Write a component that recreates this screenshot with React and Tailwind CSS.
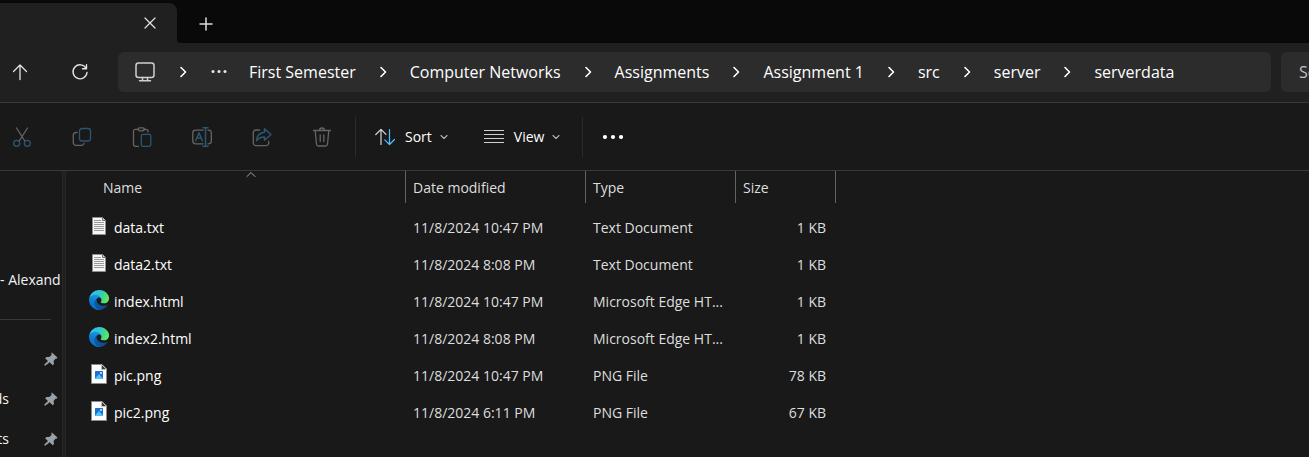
import React from "react";

const CRUMBS = [
  "First Semester",
  "Computer Networks",
  "Assignments",
  "Assignment 1",
  "src",
  "server",
  "serverdata",
];

const FILES = [
  { name: "data.txt", date: "11/8/2024 10:47 PM", type: "Text Document", size: "1 KB", icon: "text" },
  { name: "data2.txt", date: "11/8/2024 8:08 PM", type: "Text Document", size: "1 KB", icon: "text" },
  { name: "index.html", date: "11/8/2024 10:47 PM", type: "Microsoft Edge HT...", size: "1 KB", icon: "edge" },
  { name: "index2.html", date: "11/8/2024 8:08 PM", type: "Microsoft Edge HT...", size: "1 KB", icon: "edge" },
  { name: "pic.png", date: "11/8/2024 10:47 PM", type: "PNG File", size: "78 KB", icon: "image" },
  { name: "pic2.png", date: "11/8/2024 6:11 PM", type: "PNG File", size: "67 KB", icon: "image" },
];

const GREY = "#656565";
const BLUE = "#2b5770";

function Stroke({ size = 20, width = 1.2, color = "currentColor", children, className = "" }) {
  return (
    <svg
      width={size}
      height={size}
      viewBox={`0 0 ${size} ${size}`}
      fill="none"
      stroke={color}
      strokeWidth={width}
      strokeLinecap="round"
      strokeLinejoin="round"
      className={`shrink-0 ${className}`}
      aria-hidden="true"
    >
      {children}
    </svg>
  );
}

function TextFileIcon() {
  return (
    <svg width="20" height="20" viewBox="0 0 20 20" aria-hidden="true">
      <path d="M3.5 1.5h10l3 3v14h-13z" fill="#f6f6f6" stroke="#8d8d8d" />
      <path d="M13.5 1.5v3h3" fill="#d0d0d0" stroke="#6f6f6f" />
      <path d="M5 4.5h7M5 6.5h10M5 8.5h10M5 10.5h10M5 12.5h10M5 14.5h10" stroke="#9b9b9b" />
    </svg>
  );
}

function EdgeIcon({ id }) {
  return (
    <svg width="20" height="20" viewBox="0 0 256 256" aria-hidden="true">
      <defs>
        <linearGradient id={`${id}a`} x1="0.1" y1="0.5" x2="0.95" y2="0.5">
          <stop offset="0" stopColor="#0c59a4" />
          <stop offset="1" stopColor="#114a8b" />
        </linearGradient>
        <linearGradient id={`${id}b`} x1="0.6" y1="0" x2="0.3" y2="1">
          <stop offset="0" stopColor="#1b9de2" />
          <stop offset="0.5" stopColor="#0f7bd2" />
          <stop offset="1" stopColor="#0870cc" />
        </linearGradient>
        <linearGradient id={`${id}c`} x1="0" y1="0.3" x2="1" y2="0.6">
          <stop offset="0" stopColor="#35c1f1" />
          <stop offset="0.45" stopColor="#2ec5d3" />
          <stop offset="0.75" stopColor="#43d98a" />
          <stop offset="1" stopColor="#66eb4e" />
        </linearGradient>
      </defs>
      <path
        fill={`url(#${id}a)`}
        d="M231 190.500c-3.400 1.800-6.900 3.400-10.500 4.700a101.300 101.300 0 0 1-35.700 6.400c-47 0-88-32.300-88-73.800a31.300 31.300 0 0 1 16.300-27.200c-42.500 1.800-53.500 46.100-53.500 72 0 73.400 67.700 80.900 82.300 80.900 7.800 0 19.700-2.300 26.800-4.500l1.300-.5a128 128 0 0 0 66.500-52.600 4 4 0 0 0-5.200-5.400z"
      />
      <path
        fill={`url(#${id}b)`}
        d="M105.700 241.400a79.200 79.200 0 0 1-22.700-21.300 80.700 80.700 0 0 1 29.500-120c3.200-1.400 8.500-4.100 15.600-4a32.400 32.400 0 0 1 25.700 13 31.900 31.900 0 0 1 6.300 18.700c0-.2 24.500-79.600-80-79.600C36.200 48.200.1 89.900.1 126.400a130.200 130.200 0 0 0 12.100 56 128 128 0 0 0 156.400 67.100 75.500 75.500 0 0 1-62.800-8z"
      />
      <path
        fill={`url(#${id}c)`}
        d="M152.300 148.900c-.8 1-3.300 2.500-3.300 5.700 0 2.600 1.700 5.100 4.700 7.300 14.500 10.100 41.900 8.700 42 8.700a60.100 60.100 0 0 0 30.500-8.400 61.900 61.900 0 0 0 30.500-53.400c.3-22.400-8-37.300-11.300-43.900C224.100 23.500 177.700 0 127.100 0A128 128 0 0 0 0 126.200c.5-36.500 36.800-66 80-66 3.500 0 23.500.3 42 10 16.300 8.600 24.900 19 30.800 29.200 6.100 10.600 7.200 24.100 7.200 29.500s-2.700 13.300-7.700 20z"
      />
    </svg>
  );
}

function ImageFileIcon() {
  return (
    <svg width="20" height="20" viewBox="0 0 20 20" aria-hidden="true">
      <path d="M2.500.500h10.500l4.500 4.500v14.500h-15z" fill="#fdfdfd" stroke="#8a8a8a" />
      <path d="M12.500.500v5h5z" fill="#3a3a3a" stroke="#c9c9c9" strokeWidth="0.800" />
      <rect x="6" y="7" width="8" height="8" rx="0.600" fill="#1f6fd0" />
      <path d="M6 14.400l4-4.400 4 4.400v.600H6z" fill="#4fc3f7" />
      <circle cx="12" cy="9" r="0.900" fill="#fff" />
    </svg>
  );
}

function FileIcon({ kind, id }) {
  if (kind === "text") return <TextFileIcon />;
  if (kind === "edge") return <EdgeIcon id={id} />;
  return <ImageFileIcon />;
}

function PinIcon() {
  return (
    <svg width="14" height="14" viewBox="0 0 14 14" fill="#98a2a8" className="shrink-0" aria-hidden="true">
      <path d="M7.800.400L13.500 5.500l-1 1.200-.800-.100-2.100 2.400.4 2.900-1.300 1.300-3-3L1.500 13.600l-1.200-.2.200-1.100L4 9 1.100 6.200l1.300-1.300 2.800.2L7.600 2.900l-.3-1.200z" />
    </svg>
  );
}

function Chevron() {
  return (
    <Stroke size={8} width={1.6} className="overflow-visible">
      <path d="M2 -0.500L6.500 4 2 8.500" />
    </Stroke>
  );
}

function DownChevron() {
  return (
    <Stroke size={8} width={1.1} color="#b4b4b4">
      <path d="M1 2.500l3 3 3-3" />
    </Stroke>
  );
}

function TabStrip() {
  return (
    <div className="flex h-[43px] bg-[#090909]">
      <div className="flex w-[177px] flex-col pt-[3px]">
        <div className="flex flex-1 items-center justify-end rounded-tr-lg bg-[#202020] pr-5">
          <button type="button" aria-label="Close tab" className="text-[#e4e4e4]">
            <Stroke size={14}>
              <path d="M2 2l10 10M12 2L2 12" />
            </Stroke>
          </button>
        </div>
      </div>
      <div className="flex flex-1 bg-[#202020]">
        <div className="flex flex-1 items-center rounded-bl bg-[#090909] pl-[22px] pt-1">
          <button type="button" aria-label="New tab" className="text-[#dcdcdc]">
            <Stroke size={14} width={1.5}>
              <path d="M7 1v12M1 7h12" />
            </Stroke>
          </button>
        </div>
      </div>
    </div>
  );
}

function AddressRow() {
  return (
    <div className="flex h-[60px] items-center overflow-hidden border-b border-[#393939] bg-[#202020] pb-px pl-[11px] text-white">
      <button type="button" aria-label="Up" className="mr-[42px] text-[#e4e4e4]">
        <Stroke size={18} width={1.3}>
          <path d="M9 16.500V2M2.500 8.500L9 2l6.500 6.500" />
        </Stroke>
      </button>
      <button type="button" aria-label="Refresh" className="mr-[29px] text-[#e4e4e4]">
        <Stroke size={18} width={1.4}>
          <path d="M15.200 5.500A7 7 0 1 0 16 9.500M15.500 1.800v4h-4" />
        </Stroke>
      </button>
      <nav aria-label="Address" className="flex h-10 min-w-0 flex-1 items-center overflow-hidden rounded-md bg-[#2c2c2c] pl-[17px]">
        <button type="button" aria-label="This PC" className="mr-6 text-[#d0d0d0]">
          <Stroke width={1.5}>
            <rect x="1" y="1" width="18" height="14.500" rx="2.500" />
            <path d="M7.500 15.500v3M12.500 15.500v3M4.500 18.700h11" />
          </Stroke>
        </button>
        <Chevron />
        <button type="button" aria-label="More folders" className="ml-6 mr-[22px]">
          <svg width="16" height="16" viewBox="0 0 16 16" fill="#e8e8e8" aria-hidden="true">
            <circle cx="2" cy="7.500" r="1.500" />
            <circle cx="8" cy="7.500" r="1.500" />
            <circle cx="14" cy="7.500" r="1.500" />
          </svg>
        </button>
        <ol className="flex items-center gap-[23px] text-[16px] leading-6">
          {CRUMBS.map((c, i) => (
            <li key={c} className="flex items-center gap-[23px] whitespace-nowrap">
              {i > 0 && <Chevron />}
              <a href="#">{c}</a>
            </li>
          ))}
        </ol>
      </nav>
      <input
        type="text"
        aria-label="Search serverdata"
        placeholder="Search serverdata"
        className="ml-2.5 h-10 w-7 rounded-l-md bg-[#2c2c2c] pl-[18px] text-[16px] outline-none placeholder:text-[#c0c0c0]"
      />
    </div>
  );
}

function ToolButton({ label, children }) {
  return (
    <button type="button" aria-label={label} disabled>
      <Stroke size={20} width={1.3} color={GREY}>
        {children}
      </Stroke>
    </button>
  );
}

function Toolbar() {
  return (
    <div className="flex h-[68px] items-center border-b border-[#393939] bg-[#191919] pl-3 text-white">
      <div className="flex items-center gap-10 pr-[23px]">
        <ToolButton label="Cut">
          <path d="M4.500 1l8 12.500M15.500 1l-8 12.500" />
          <g stroke={BLUE}>
            <circle cx="4.700" cy="16.300" r="3" />
            <circle cx="15.300" cy="16.300" r="3" />
          </g>
        </ToolButton>
        <ToolButton label="Copy">
          <path d="M5 5.500H4a2.700 2.700 0 0 0-2.700 2.700v7.500A2.700 2.700 0 0 0 4 18.400h5.500a2.700 2.700 0 0 0 2.600-2" />
          <rect x="7.500" y="1.500" width="11" height="12.500" rx="2.500" stroke={BLUE} />
        </ToolButton>
        <ToolButton label="Paste">
          <path d="M6.500 2.300h-3a2 2 0 0 0-2 2v13a2 2 0 0 0 2 2h3M11.500 2.300h2.500a2 2 0 0 1 2 2v.700" />
          <rect x="6" y="0.800" width="6.500" height="3" rx="1.500" />
          <rect x="9.300" y="7.300" width="9.500" height="12" rx="1.500" stroke={BLUE} />
        </ToolButton>
        <ToolButton label="Rename">
          <path d="M11 3.200H3.500A2.700 2.700 0 0 0 .8 5.900v8.200a2.700 2.700 0 0 0 2.700 2.700H11M16 3.200h.7a2.700 2.700 0 0 1 2.600 2.700v8.200a2.700 2.700 0 0 1-2.600 2.700H16" />
          <path d="M3.700 13.700l3.300-8 3.300 8M4.800 11h4.400M13.500 1v18M11 .8h5M11 19.200h5" stroke={BLUE} strokeWidth="1.500" />
        </ToolButton>
        <ToolButton label="Share">
          <path d="M7.500 3H4a2.700 2.700 0 0 0-2.700 2.700V16A2.700 2.700 0 0 0 4 18.700h10a2.700 2.700 0 0 0 2.700-2.700v-1.500" />
          <path d="M12.500 1.800l6.500 5.700-6.500 5.700V10c-4 0-6 1-8 3.700C5 9 7.500 5.500 12.500 5.200z" stroke={BLUE} strokeWidth="1.500" />
        </ToolButton>
        <ToolButton label="Delete">
          <path d="M1.500 3.500h17M3.200 3.500l1.300 13.700a2 2 0 0 0 2 1.800h7a2 2 0 0 0 2-1.800l1.300-13.700M7.500 3.500a2.500 2.500 0 0 1 5 0M8.200 8v6.500M11.800 8v6.500" />
        </ToolButton>
      </div>
      <div className="flex h-10 items-center gap-9 border-x border-[#2b2b2b] pl-[19px] pr-[22px]">
        <button type="button" className="flex items-center gap-2 text-[14px] leading-5">
          <Stroke color="#d8d8d8">
            <path d="M6 17.500V2.500M.8 7.500L6 2.300l5 5" />
            <path d="M14.500 2.500v15M9.800 12.800l4.700 4.700 5-5" stroke="#4cc2ff" />
          </Stroke>
          <span className="ml-0.5">Sort</span>
          <DownChevron />
        </button>
        <button type="button" className="flex items-center gap-2 text-[14px] leading-5">
          <Stroke color="#d0d0d0">
            <path d="M.5 3.500h19M.5 7.500h19M.5 11.500h19M.5 15.500h19" />
          </Stroke>
          <span className="ml-0.5">View</span>
          <DownChevron />
        </button>
      </div>
      <button type="button" aria-label="See more" className="ml-5">
        <svg width="20" height="20" viewBox="0 0 20 20" fill="#fff" aria-hidden="true">
          <circle cx="2" cy="10" r="2.100" />
          <circle cx="10" cy="10" r="2.100" />
          <circle cx="18" cy="10" r="2.100" />
        </svg>
      </button>
    </div>
  );
}

function Sidebar() {
  return (
    <aside className="flex w-[62px] shrink-0 flex-col overflow-hidden pt-[89px] text-[14px] leading-10 text-[#f2f2f2]">
      <div className="h-10 whitespace-nowrap">- Alexand</div>
      <hr className="mb-[19px] mr-[11px] mt-[19px] border-[#393939]" />
      {["", "ds", "ts"].map((label, i) => (
        <div key={i} className="flex h-10 items-center justify-between pr-1">
          <span className="flex w-[9px] justify-end overflow-hidden">{label}</span>
          <PinIcon />
        </div>
      ))}
    </aside>
  );
}

function HeadCell({ children }) {
  return (
    <th scope="col" className="p-0 pb-[6px] text-left font-normal">
      <div className="h-8 border-r border-[#636363] pl-[7px] leading-[34px]">{children}</div>
    </th>
  );
}

function FileTable() {
  return (
    <table className="w-[770px] table-fixed border-collapse self-start text-[14px] leading-5 text-[#dedede]">
      <colgroup>
        <col className="w-[340px]" />
        <col className="w-[180px]" />
        <col className="w-[150px]" />
        <col className="w-[100px]" />
      </colgroup>
      <thead>
        <tr>
          <th scope="col" className="p-0 pb-[6px] text-left font-normal">
            <div className="relative h-8 border-r border-[#636363] pl-[37px] leading-[34px]">
              Name
              <Stroke size={10} width={1} color="#a8a8a8" className="absolute left-[180px] top-0">
                <path d="M1 5.500l4-4 4 4" />
              </Stroke>
            </div>
          </th>
          <HeadCell>Date modified</HeadCell>
          <HeadCell>Type</HeadCell>
          <HeadCell>Size</HeadCell>
        </tr>
      </thead>
      <tbody>
        {FILES.map((f, i) => (
          <tr key={f.name} className="h-[37px]">
            <td className="p-0 pl-[23px]">
              <div className="flex items-center gap-[5px] text-white">
                <span className="-mt-1">
                  <FileIcon kind={f.icon} id={`edge${i}`} />
                </span>
                {f.name}
              </div>
            </td>
            <td className="p-0 pl-[7px]">{f.date}</td>
            <td className="whitespace-nowrap p-0 pl-[7px]">{f.type}</td>
            <td className="p-0 pr-2.5 text-right">{f.size}</td>
          </tr>
        ))}
      </tbody>
    </table>
  );
}

export default function App() {
  return (
    <div className="flex min-h-screen flex-col overflow-hidden bg-[#191919] font-['Open_Sans',sans-serif]">
      <TabStrip />
      <AddressRow />
      <Toolbar />
      <main className="flex flex-1 overflow-hidden">
        <Sidebar />
        <div className="w-1 shrink-0 border-x border-[#262626] bg-[#202020]" />
        <FileTable />
      </main>
    </div>
  );
}
